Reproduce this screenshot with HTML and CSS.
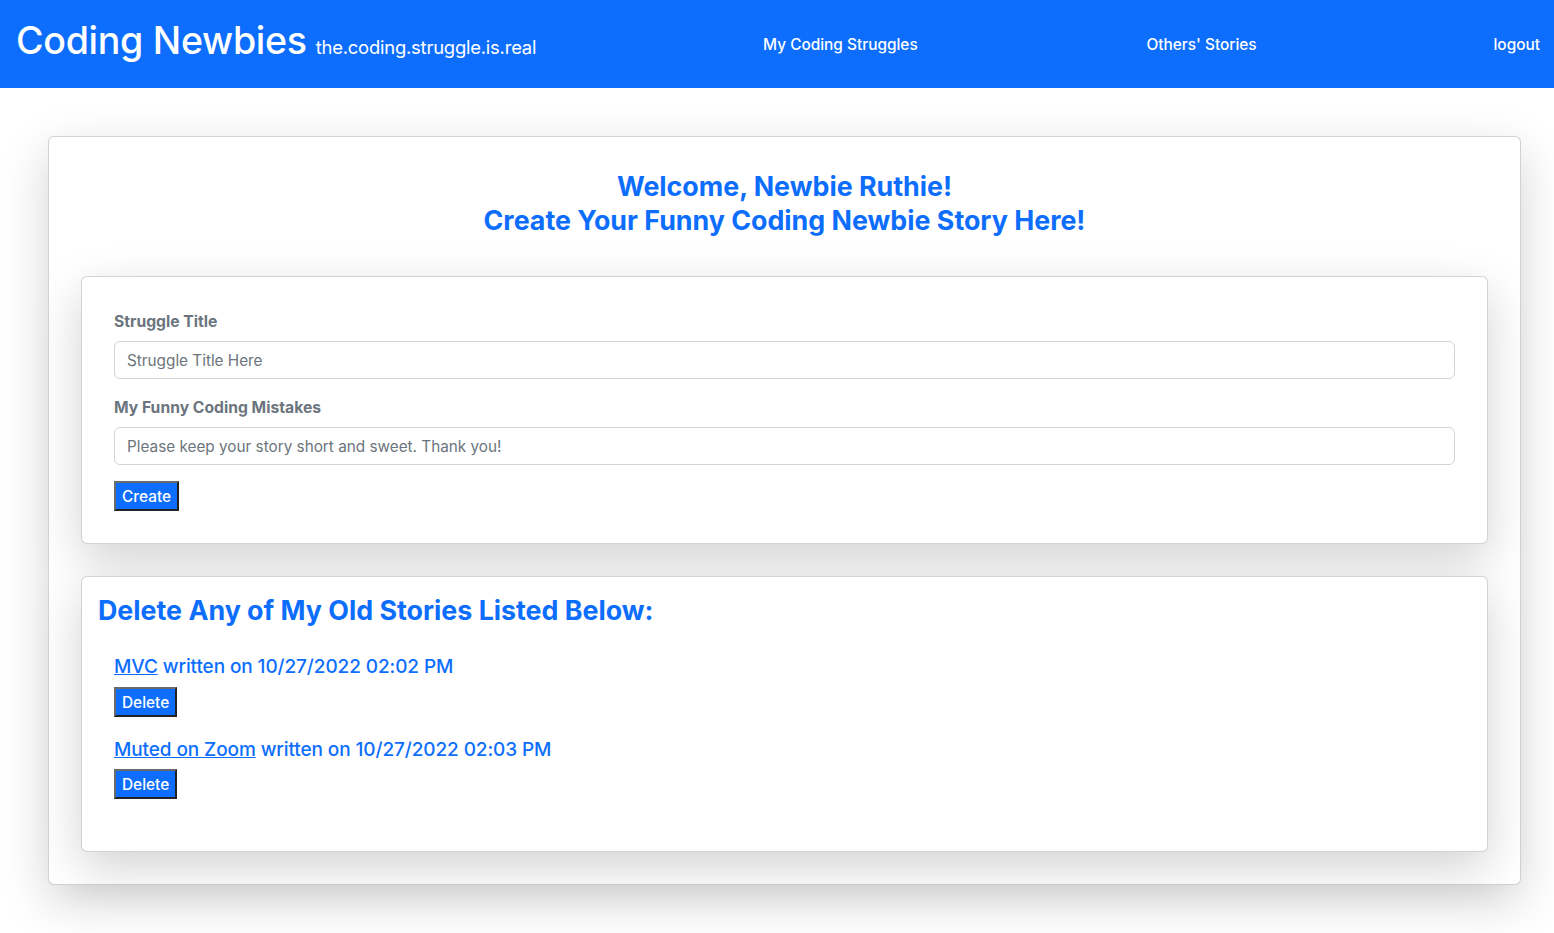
FILE: index.html
```html
<!DOCTYPE html>
<html lang="en">
<head>
<meta charset="utf-8">
<title>Coding Newbies</title>
<link rel="stylesheet" href="styles.css">
</head>
<body>
<nav class="navbar">
  <div class="brand"><span class="brand-name">Coding Newbies</span><span class="brand-tag">the.coding.struggle.is.real</span></div>
  <a class="nav-link nav-first" href="#">My Coding Struggles</a>
  <a class="nav-link nav-mid" href="#">Others' Stories</a>
  <a class="nav-link" href="#">logout</a>
</nav>
<main class="outer-card">
  <h3 class="welcome">Welcome, Newbie Ruthie!<br>Create Your Funny Coding Newbie Story Here!</h3>
  <section class="card form-card">
    <label class="label" for="title">Struggle Title</label>
    <input class="input" id="title" type="text" placeholder="Struggle Title Here">
    <label class="label" for="story">My Funny Coding Mistakes</label>
    <input class="input" id="story" type="text" placeholder="Please keep your story short and sweet. Thank you!">
    <button class="btn" type="button">Create</button>
  </section>
  <section class="card list-card">
    <h3 class="list-title">Delete Any of My Old Stories Listed Below:</h3>
    <ul class="stories">
      <li class="story">
        <h5 class="story-line"><a href="#">MVC</a> written on 10/27/2022 02:02 PM</h5>
        <button class="btn" type="button">Delete</button>
      </li>
      <li class="story">
        <h5 class="story-line"><a href="#">Muted on Zoom</a> written on 10/27/2022 02:03 PM</h5>
        <button class="btn" type="button">Delete</button>
      </li>
    </ul>
  </section>
</main>
</body>
</html>
```

FILE: styles.css
```css
* { box-sizing: border-box; }
html, body { margin: 0; padding: 0; background: #fff; }
body {
  font-family: Inter, "Noto Sans", "Liberation Sans", sans-serif;
  font-size: 16px;
  line-height: 1.5;
  color: #212529;
  padding-bottom: 60px;
}
.navbar {
  height: 88px;
  background: #0d6efd;
  display: flex;
  align-items: center;
  justify-content: space-between;
  padding: 0 14px 0 16px;
}
.brand { display: flex; align-items: baseline; gap: 9px; color: #fff; margin-top: -7px; margin-right: -8px; }
.brand-name { font-size: 37.6px; font-weight: 500; letter-spacing: -0.3px; line-height: 1.2; }
.brand-tag { font-size: 18.4px; font-weight: 400; letter-spacing: -0.2px; }
.nav-link { color: #fff; text-decoration: none; font-size: 15.4px; font-weight: 500; margin-top: 2px; }
.nav-first { margin-left: 6px; }
.nav-mid { margin-right: 8px; }

.outer-card {
  margin: 48px 33px 0 48px;
  border: 1px solid rgba(0,0,0,.175);
  border-radius: 6px;
  box-shadow: 0 1rem 3rem rgba(0,0,0,.175);
  padding: 32px;
  background: #fff;
}
.welcome {
  margin: 0 0 39px;
  text-align: center;
  color: #0d6efd;
  font-size: 26.8px;
  font-weight: 700;
  line-height: 34px;
}
.card {
  border: 1px solid rgba(0,0,0,.175);
  border-radius: 6px;
  box-shadow: 0 1rem 3rem rgba(0,0,0,.175);
  background: #fff;
}
.form-card {
  padding: 32px;
  display: flex;
  flex-direction: column;
  align-items: flex-start;
  margin-bottom: 32px;
}
.label {
  font-weight: 700;
  color: #6c757d;
  font-size: 15.7px;
  line-height: 24px;
  margin: 1px 0 7px;
}
.input {
  width: 100%;
  height: 38px;
  border: 1px solid #ced4da;
  border-radius: 6px;
  padding: 6px 12px;
  font-family: inherit;
  font-size: 15.3px;
  color: #212529;
  margin-bottom: 16px;
}
.input::placeholder { color: #6c757d; opacity: 1; }
.btn {
  background: #0d6efd;
  color: #fff;
  font-family: inherit;
  font-size: 15.4px;
  font-weight: 500;
  line-height: 24px;
  padding: 2px 6px 0;
  border: 2px solid;
  border-color: #6a6a6a #222 #222 #6a6a6a;
  cursor: pointer;
}
.list-card { padding: 16px 16px 15px; }
.list-title {
  margin: 0;
  color: #0d6efd;
  font-size: 26.8px;
  font-weight: 700;
  line-height: 34px;
}
.stories {
  list-style: none;
  margin: 0;
  padding: 28px 0 37px 16px;
  display: flex;
  flex-direction: column;
  gap: 20px;
}
.story { display: flex; flex-direction: column; align-items: flex-start; }
.story-line {
  margin: 0 0 8px;
  color: #0d6efd;
  font-size: 19px;
  font-weight: 500;
  line-height: 24px;
  letter-spacing: -0.1px;
}
.story + .story .story-line { margin-top: 1px; margin-bottom: 7px; }
.story-line a { color: #0d6efd; text-decoration: underline; }
```
